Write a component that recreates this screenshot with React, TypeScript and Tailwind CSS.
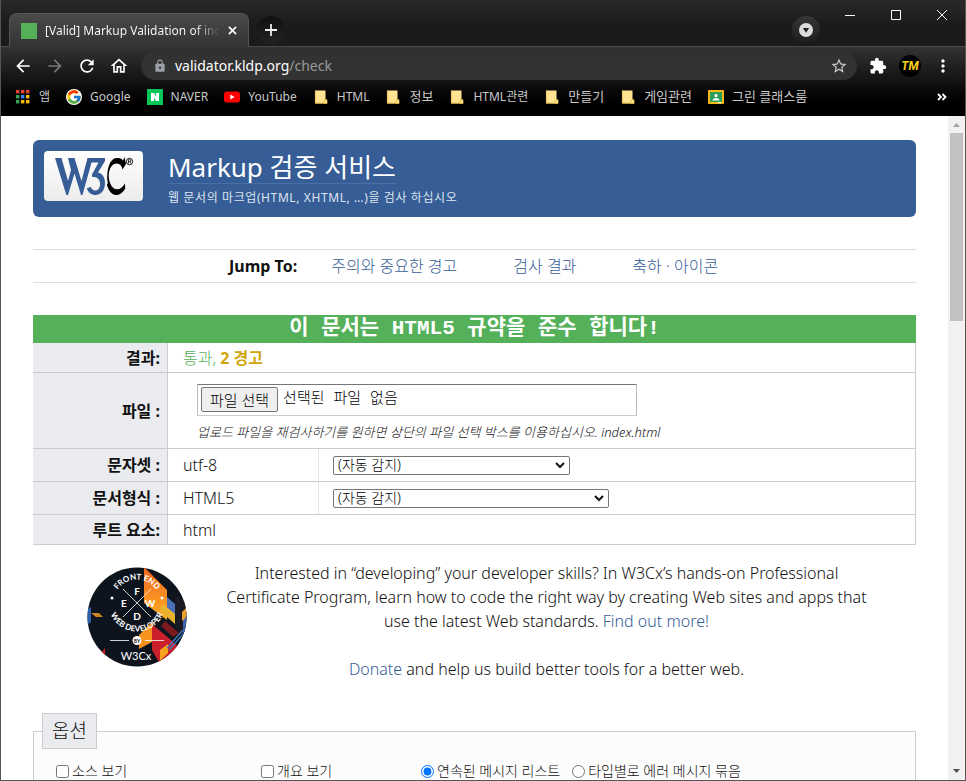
import type { ReactNode } from "react";
import {
  MdArrowBack,
  MdArrowForward,
  MdExtension,
  MdLock,
  MdMoreVert,
  MdOutlineHome,
  MdRefresh,
  MdStarBorder,
} from "react-icons/md";
import { FcGoogle } from "react-icons/fc";

const APP_DOTS = ["#ea4335", "#ea4335", "#ea4335", "#34a853", "#4285f4", "#fbbc05", "#34a853", "#fbbc05", "#fbbc05"];

function AppsIcon() {
  return (
    <svg viewBox="0 0 16 16" className="size-4">
      {APP_DOTS.map((c, i) => (
        <rect key={i} x={1 + (i % 3) * 5} y={1 + Math.floor(i / 3) * 5} width="3.4" height="3.4" fill={c} />
      ))}
    </svg>
  );
}

function NaverIcon() {
  return (
    <svg viewBox="0 0 16 16" className="size-4">
      <rect width="16" height="16" fill="#08c75a" />
      <path d="M4 4h3l2 3.4V4h3v8H9L7 8.6V12H4z" fill="#fff" />
    </svg>
  );
}

function YouTubeIcon() {
  return (
    <svg viewBox="0 0 16 16" className="size-4">
      <rect y="2.5" width="16" height="11" rx="3" fill="#f00" />
      <path d="M6.3 5.5v5L10.6 8z" fill="#fff" />
    </svg>
  );
}

function FolderIcon() {
  return (
    <svg viewBox="0 0 16 16" className="size-4">
      <path d="M2 1.5h10.5v9H14v4H2z" fill="#ffe391" />
      <path d="M2.4 1.5v12.6h9.2M11 14.5V11h3v3.5z" fill="none" stroke="#e8bf4a" strokeWidth="0.8" />
    </svg>
  );
}

function ClassroomIcon() {
  return (
    <svg viewBox="0 0 16 16" className="size-4">
      <rect y="1" width="16" height="14" rx="1" fill="#f5ba15" />
      <rect x="2" y="3" width="12" height="10" fill="#2e9e5b" />
      <circle cx="8" cy="6.6" r="1.6" fill="#fff" />
      <path d="M4.5 11.5c0-1.8 1.6-2.6 3.5-2.6s3.5.8 3.5 2.6z" fill="#fff" />
      <path d="M10 13h3v1h-3z" fill="#fff" />
    </svg>
  );
}

const BOOKMARKS: { label: string; icon: ReactNode; hangul?: boolean }[] = [
  { label: "앱", icon: <AppsIcon /> },
  { label: "Google", icon: <FcGoogle className="size-4 rounded-full bg-white" /> },
  { label: "NAVER", icon: <NaverIcon /> },
  { label: "YouTube", icon: <YouTubeIcon /> },
  { label: "HTML", icon: <FolderIcon /> },
  { label: "정보", icon: <FolderIcon />, hangul: true },
  { label: "HTML관련", icon: <FolderIcon /> },
  { label: "만들기", icon: <FolderIcon />, hangul: true },
  { label: "게임관련", icon: <FolderIcon />, hangul: true },
  { label: "그린 클래스룸", icon: <ClassroomIcon />, hangul: true },
];

function TabStrip() {
  return (
    <div className="relative flex h-[47px] items-end border-b border-[#4a4a4a] bg-linear-to-b from-[#292929] to-[#1a1a1a] to-60% pl-2">
      <div className="-mb-px flex h-[34px] w-60 items-center rounded-t-lg border border-b-0 border-[#555] bg-linear-to-b from-[#4a4a4a] to-[#333] pl-[11px] pr-2">
        <span className="size-4 shrink-0 bg-[#55b05a]" />
        <span className="ml-2 flex-1 overflow-hidden whitespace-nowrap bg-linear-to-r from-white from-85% to-transparent bg-clip-text text-xs text-transparent">
          [Valid] Markup Validation of index.html
        </span>
        <button aria-label="탭 닫기" className="ml-1 grid size-4 place-items-center">
          <svg viewBox="0 0 10 10" className="size-[9px]" stroke="#fff" strokeWidth="1.8">
            <path d="M1 1l8 8M9 1l-8 8" />
          </svg>
        </button>
      </div>
      <button aria-label="새 탭" className="mb-[2px] ml-2 grid size-7 place-items-center rounded-full bg-linear-to-b from-[#111] to-[#222]">
        <svg viewBox="0 0 12 12" className="size-3" stroke="#eee" strokeWidth="1.8">
          <path d="M6 0v12M0 6h12" />
        </svg>
      </button>
      <button
        aria-label="탭 검색"
        className="mb-[2px] ml-auto mr-[7px] grid size-7 place-items-center rounded-full bg-linear-to-b from-[#363636] to-[#1c1c1c]"
      >
        <svg viewBox="0 0 14 14" className="size-[14px]">
          <circle cx="7" cy="7" r="7" fill="#dcdcdc" />
          <path d="M3.8 5h6.4L7 9.8z" fill="#222" />
        </svg>
      </button>
      <div className="flex h-7 self-start pt-[2px]">
        <button aria-label="최소화" className="grid h-full w-[46px] place-items-center">
          <svg viewBox="0 0 10 10" className="size-[10px]" stroke="#fff">
            <path d="M0 5.5h10" />
          </svg>
        </button>
        <button aria-label="최대화" className="grid h-full w-[46px] place-items-center">
          <svg viewBox="0 0 10 10" className="size-[10px]" stroke="#fff" fill="none">
            <path d="M.5.5h9v9h-9z" />
          </svg>
        </button>
        <button aria-label="닫기" className="grid h-full w-[46px] place-items-center">
          <svg viewBox="0 0 10 10" className="size-[10px]" stroke="#fff">
            <path d="M0 0l10 10M10 0L0 10" />
          </svg>
        </button>
      </div>
    </div>
  );
}

function Toolbar() {
  return (
    <div className="flex h-[37px] items-center bg-linear-to-b from-[#333] to-[#101010] px-3 text-white">
      <div className="flex gap-3">
        <button aria-label="뒤로">
          <MdArrowBack className="size-5" />
        </button>
        <button aria-label="앞으로" className="text-[#777]">
          <MdArrowForward className="size-5" />
        </button>
        <button aria-label="새로고침">
          <MdRefresh className="size-5" />
        </button>
        <button aria-label="홈">
          <MdOutlineHome className="size-5" />
        </button>
      </div>
      <div className="ml-3 flex h-7 flex-1 items-center rounded-full bg-[#323232] pl-3 pr-[9px] text-sm">
        <MdLock className="mr-2 size-[14px] text-[#9aa0a6]" />
        <div className="flex-1">
          validator.kldp.org<span className="text-[#9a9a9a]">/check</span>
        </div>
        <button aria-label="북마크에 추가">
          <MdStarBorder className="size-[18px] text-[#ccc]" />
        </button>
      </div>
      <button aria-label="확장 프로그램" className="ml-3">
        <MdExtension className="size-[18px]" />
      </button>
      <button
        aria-label="프로필"
        className="ml-3 grid size-[22px] place-items-center rounded-full bg-black font-['Roboto',sans-serif] text-xs font-bold italic leading-none text-[#ffd21c]"
      >
        TM
      </button>
      <button aria-label="메뉴" className="ml-3">
        <MdMoreVert className="size-5" />
      </button>
    </div>
  );
}

function BookmarkBar() {
  return (
    <nav className="flex h-8 items-center gap-4 bg-linear-to-b from-[#101010] to-black pb-[6px] pl-[14px] pr-[18px] text-[#c8c8c8]">
      {BOOKMARKS.map((b) => (
        <a
          key={b.label}
          href="#bookmark"
          className={`flex h-5 items-center gap-2 whitespace-nowrap ${b.hangul ? "text-[13px]" : "text-xs"}`}
        >
          {b.icon}
          {b.label}
        </a>
      ))}
      <button aria-label="북마크 더보기" className="ml-auto">
        <svg viewBox="0 0 10 8" className="h-2 w-[10px]" fill="none" stroke="#fff" strokeWidth="1.8">
          <path d="M1 1l3 3-3 3M5.500 1l3 3-3 3" />
        </svg>
      </button>
    </nav>
  );
}

function W3CLogo() {
  return (
    <svg viewBox="0 0 99 50" className="h-[50px] w-[99px] rounded bg-linear-to-b from-white to-[#ececec]" role="img" aria-label="W3C">
      <path
        d="M11 7h6.500l6.500 23 3-11L24 7h6.500L37.500 30 43.500 7H61v3L54 21.500c4.500 1 7 5 7 10.500 0 7-3.800 12-9.500 12-4 0-7.200-2.300-8.700-6.500l3.800-1.800c1 2.500 2.700 3.800 4.700 3.800 2.900 0 4.800-2.700 4.800-6.500 0-4.300-2.600-7-6.800-7H48v-2.500L54.500 11.500H47.500L38.500 44h-1.500L30.500 22.500 24 44h-1.700z"
        fill="#365d96"
      />
      <path
        d="M80.500 6l1.500 7-3.500 5.500c-.6-4-2.800-6-5.500-6-4.800 0-8 4.500-8.300 12.500 .3 7.500 3.700 13.200 8.300 13.200 3.200 0 5.800-2 8-6l.2 5.300c-2.300 4-5.200 6.500-9 6.500-4.500 0-7.800-4.500-9.300-10.500l1-1.500c-.6-2.500-.8-4.500-.7-7C63.600 14.500 67.200 7 73 7c2.700 0 4.800.5 6 2.500z"
        fill="#000"
      />
      <circle cx="85.500" cy="10.500" r="3.200" fill="none" stroke="#000" strokeWidth="0.9" />
      <path d="M84.400 12.500V8.700h1.400c1.500 0 1.500 2 0 2h-1.300m1.300 0l1.200 1.800" fill="none" stroke="#000" strokeWidth="0.8" />
    </svg>
  );
}

function DeveloperBadge() {
  return (
    <svg viewBox="0 0 100 100" className="size-[100px] shrink-0" role="img" aria-label="Front End Web Developer by W3Cx">
      <defs>
        <clipPath id="disc">
          <circle cx="50" cy="50" r="49.500" />
        </clipPath>
        <linearGradient id="flame" x1="0" y1="0" x2="0" y2="1">
          <stop offset="0" stopColor="#f26522" />
          <stop offset="1" stopColor="#fdb022" />
        </linearGradient>
        <path id="arcTop" d="M26.500 36A23.500 23.500 0 0 1 73.500 36" />
        <path id="arcBottom" d="M21.500 36A28.500 28.500 0 0 0 78.500 36" />
      </defs>
      <g clipPath="url(#disc)">
        <rect width="100" height="100" fill="#0e141d" />
        <path d="M57 0l23 23v30L57 36z" fill="url(#flame)" />
        <path d="M80 30l8 7v19l-8-6z" fill="#4b6fb5" />
        <path d="M72 43l16 14v-10L76 37z" fill="#e8b22e" />
        <path d="M88 28l12 8v40L88 60z" fill="#1a1b22" />
        <path d="M95 45l5-5v16l-5-3z" fill="#e8a02e" />
        <path d="M96 54l4-6v20l-4-3z" fill="#3c66b0" />
        <path d="M78 54l14 12-6 4-12-11z" fill="#7c1a20" />
        <path d="M65 57l26 22-18 18-8-14z" fill="#c9202b" />
        <path d="M52 68l13-13v20L52 82z" fill="#f7941d" />
        <path d="M73 83l8-6v9l-8 8z" fill="#f7a21d" />
        <path d="M80 81l16-18M82 83l16-18" stroke="#3f7ac4" strokeWidth="1.300" />
        <path d="M0 42l4-2v15l-4 3z" fill="#2f5fa8" />
        <path d="M4 46h8l4 4H9z" fill="#c8861f" />
        <path d="M14 86l4-5v10z" fill="#c9202b" />
      </g>
      <path d="M36 22l28 28M64 22L36 50M23 73.500h19M58 73.500h19" stroke="#fff" strokeWidth="0.8" />
      <circle cx="25" cy="31" r="1.500" fill="#fff" />
      <circle cx="75" cy="31" r="1.500" fill="#fff" />
      <g fill="#fff" fontFamily="Lato, sans-serif" fontWeight="700" textAnchor="middle">
        <text fontSize="8">
          <textPath href="#arcTop" startOffset="50%">
            FRONT END
          </textPath>
        </text>
        <text fontSize="8">
          <textPath href="#arcBottom" startOffset="50%">
            WEB DEVELOPER
          </textPath>
        </text>
        <text x="50" y="28" fontSize="10">F</text>
        <text x="37" y="40" fontSize="10">E</text>
        <text x="63" y="40" fontSize="10">W</text>
        <text x="50" y="53" fontSize="10">D</text>
        <text x="49" y="93" fontSize="11" fontWeight="400">W3Cx</text>
      </g>
      <circle cx="50" cy="73.500" r="4.500" fill="#fff" />
      <text x="50" y="75.500" fontSize="5" fontWeight="700" textAnchor="middle" fontFamily="Lato, sans-serif" fill="#111">
        BY
      </text>
    </svg>
  );
}

function RowHead({ children }: { children: ReactNode }) {
  return (
    <th scope="row" className="w-[135px] border-r border-b border-[#ccc] bg-[#eaebee] pr-[7px] text-right font-bold">
      {children}
    </th>
  );
}

function DetectSelect({ label, className }: { label: string; className: string }) {
  return (
    <div className={`relative ${className}`}>
      <select
        aria-label={label}
        className="block h-[19px] w-full appearance-none rounded-xs border border-[#767676] bg-white px-1 text-sm font-light leading-none text-black"
      >
        <option>(자동 감지)</option>
      </select>
      <svg viewBox="0 0 10 7" className="pointer-events-none absolute right-[5px] top-[6px] h-[7px] w-[10px]" fill="none" stroke="#111" strokeWidth="2">
        <path d="M1 1l4 4 4-4" />
      </svg>
    </div>
  );
}

function ResultTable() {
  return (
    <table className="mt-8 w-full table-fixed border-separate border-spacing-0 text-base leading-6">
      <colgroup>
        <col className="w-[135px]" />
        <col className="w-[151px]" />
        <col />
      </colgroup>
      <thead>
        <tr>
          <th
            colSpan={3}
            className="h-7 bg-[#55b05a] text-center font-['Liberation_Mono','Noto_Sans_CJK_KR',monospace] text-[21px] font-bold leading-7 text-white"
          >
            이 문서는 HTML5 규약을 준수 합니다!
          </th>
        </tr>
      </thead>
      <tbody>
        <tr className="h-[30px]">
          <RowHead>결과:</RowHead>
          <td colSpan={2} className="border-r border-b border-[#ccc] pl-[15px] font-light text-[#55b05a]">
            통과, <strong className="font-bold text-[#d1a60a]">2 경고</strong>
          </td>
        </tr>
        <tr className="h-[76px]">
          <RowHead>
            <label htmlFor="file">파일 :</label>
          </RowHead>
          <td colSpan={2} className="border-r border-b border-[#ccc] pl-[29px]">
            <div className="relative mt-[6px] flex h-8 w-[440px] items-center gap-[5px] border border-t-[#767676] border-r-[#bbb] border-b-[#ccc] border-l-[#bbb] px-[3px] text-[15px] font-light text-black">
              <span className="flex h-[25px] items-center rounded-xs border border-[#767676] bg-[#efefef] px-2">파일 선택</span>
              <span className="font-['Liberation_Mono','Noto_Sans_CJK_KR',monospace]">선택된 파일 없음</span>
              <input id="file" type="file" className="absolute inset-0 opacity-0" />
            </div>
            <p className="mt-1 text-[13px] font-light italic">업로드 파일을 재검사하기를 원하면 상단의 파일 선택 박스를 이용하십시오. index.html</p>
          </td>
        </tr>
        <tr className="h-[33px]">
          <RowHead>문자셋 :</RowHead>
          <td className="border-r border-b border-[#ccc] border-r-[#e6e6e6] pl-[15px] font-light">utf-8</td>
          <td className="border-r border-b border-[#ccc] pl-[14px]">
            <DetectSelect label="문자셋" className="w-[237px]" />
          </td>
        </tr>
        <tr className="h-[33px]">
          <RowHead>문서형식 :</RowHead>
          <td className="border-r border-b border-[#ccc] border-r-[#e6e6e6] pl-[15px] font-light">HTML5</td>
          <td className="border-r border-b border-[#ccc] pl-[14px]">
            <DetectSelect label="문서형식" className="w-[276px]" />
          </td>
        </tr>
        <tr className="h-[30px]">
          <RowHead>루트 요소:</RowHead>
          <td colSpan={2} className="border-r border-b border-[#ccc] pl-[15px] font-light">
            html
          </td>
        </tr>
      </tbody>
    </table>
  );
}

function Options() {
  return (
    <fieldset className="mt-8 border border-[#ccc] bg-[#fcfcfc] px-[22px] pb-6 text-sm font-light">
      <legend className="-ml-[14px] border border-[#ccc] bg-[#eaebee] px-[9px] py-[3px] text-[19px] leading-7">옵션</legend>
      <div className="flex whitespace-nowrap pt-3 leading-5">
        <label className="flex w-[205px] items-center gap-[3px]">
          <input type="checkbox" className="size-[13px]" />
          소스 보기
        </label>
        <label className="flex w-40 items-center gap-[3px]">
          <input type="checkbox" className="size-[13px]" />
          개요 보기
        </label>
        <label className="mr-3 flex items-center gap-[3px]">
          <input type="radio" name="group" defaultChecked className="size-[13px]" />
          연속된 메시지 리스트
        </label>
        <label className="flex items-center gap-[3px]">
          <input type="radio" name="group" className="size-[13px]" />
          타입별로 에러 메시지 묶음
        </label>
      </div>
    </fieldset>
  );
}

function Scrollbar() {
  return (
    <div className="flex w-[17px] shrink-0 flex-col items-center bg-[#f1f1f1]">
      <svg viewBox="0 0 17 17" className="size-[17px]">
        <path d="M5 11l3.500-4 3.500 4z" fill="#a3a3a3" />
      </svg>
      <div className="h-[188px] w-[13px] bg-[#c1c1c1]" />
      <svg viewBox="0 0 17 17" className="mt-auto size-[17px]">
        <path d="M5 6l3.500 4L12 6z" fill="#505050" />
      </svg>
    </div>
  );
}

export default function App() {
  return (
    <div className="flex h-screen flex-col overflow-hidden border-x border-b border-[#555] bg-white font-['Noto_Sans','Noto_Sans_CJK_KR',sans-serif]">
      <header className="shrink-0">
        <TabStrip />
        <Toolbar />
        <BookmarkBar />
      </header>
      <div className="flex min-h-0 flex-1">
        <main className="min-w-0 flex-1 overflow-hidden px-8 pt-6 text-[#111]">
          <div className="flex h-[77px] items-start rounded-md bg-[#365d96] px-[11px] py-[11px] text-white">
            <W3CLogo />
            <div className="ml-[25px]">
              <h1 className="w-fit border-b border-[#4a6fa6] text-[26px] leading-8">
                <a href="#home">Markup 검증 서비스</a>
              </h1>
              <p className="whitespace-nowrap text-xs leading-7 tracking-wider text-[#dde5f0]">
                웹 문서의 마크업(HTML, XHTML, …)을 검사 하십시오
              </p>
            </div>
          </div>

          <nav className="mt-8 flex h-[34px] items-center border-y border-[#ddd] pl-[196px] text-base">
            <strong className="mr-[34px]">Jump To:</strong>
            <div className="flex gap-14 font-light text-[#365d96]">
              <a href="#warnings">주의와 중요한 경고</a>
              <a href="#result">검사 결과</a>
              <a href="#icons">축하 · 아이콘</a>
            </div>
          </nav>

          <ResultTable />

          <section className="mt-4 flex items-start pl-[54px] pr-10 text-base font-light leading-6">
            <div className="pt-[6px]">
              <DeveloperBadge />
            </div>
            <div className="ml-[30px] flex-1 text-center">
              <p>
                Interested in “developing” your developer skills? In W3Cx’s hands-on Professional Certificate Program, learn how to code the
                right way by creating Web sites and apps that use the latest Web standards.{" "}
                <a href="#learn" className="text-[#365d96]">
                  Find out more!
                </a>
              </p>
              <p className="mt-6">
                <a href="#donate" className="text-[#365d96]">
                  Donate
                </a>{" "}
                and help us build better tools for a better web.
              </p>
            </div>
          </section>

          <Options />
        </main>
        <Scrollbar />
      </div>
    </div>
  );
}
